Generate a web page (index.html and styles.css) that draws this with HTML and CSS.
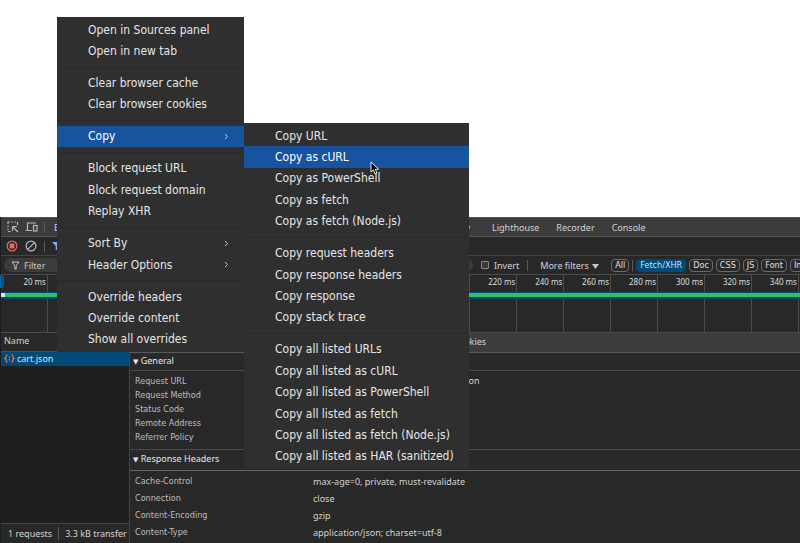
FILE: index.html
```html
<!DOCTYPE html>
<html lang="en">
  <head>
    <meta charset="UTF-8">
    <meta name="viewport" content="width=device-width, initial-scale=1.0">
    <title>DevTools - Network</title>
    <link rel="stylesheet" href="styles.css">
  </head>
  <body>
    <div class="page"></div>

    <div class="devtools">
      <div class="tabs">
        <button class="icon-btn" aria-label="Inspect element">
          <svg width="12" height="12" viewBox="0 0 12 12" fill="none" stroke="#b8b8b8" stroke-width="1.2">
            <path d="M1 3V1h2M4.500 1H6M7.500 1H9M10.500 1v3M1 4.500V6M1 7.500V9M1 10.500h2.500"/>
            <path d="M5.500 5.500L11 11M5.500 10V5.500H10"/>
          </svg>
        </button>
        <button class="icon-btn" aria-label="Toggle device toolbar">
          <svg width="13" height="12" viewBox="0 0 13 12" fill="none" stroke="#b8b8b8" stroke-width="1.2">
            <path d="M11 2H2.500v7M.5 9.500H7"/>
            <rect x="8.500" y="4.500" width="3.500" height="5.500"/>
          </svg>
        </button>
        <span class="divider"></span>
        <div class="tab-list">
          <a href="#">Elements</a>
          <a href="#">Memory</a>
        </div>
        <a href="#">Lighthouse</a>
        <a href="#">Recorder</a>
        <a href="#">Console</a>
      </div>

      <div class="toolbar">
        <button class="icon-btn" aria-label="Stop recording">
          <svg width="12" height="12" viewBox="0 0 12 12">
            <circle cx="6" cy="6" r="4.900" fill="none" stroke="#e46962" stroke-width="1.2"/>
            <rect x="3.600" y="3.600" width="4.800" height="4.800" rx=".6" fill="#e46962"/>
          </svg>
        </button>
        <button class="icon-btn" aria-label="Clear">
          <svg width="12" height="12" viewBox="0 0 12 12" fill="none" stroke="#b8b8b8" stroke-width="1.2">
            <circle cx="6" cy="6" r="4.900"/>
            <path d="M9.400 2.600L2.600 9.400"/>
          </svg>
        </button>
        <span class="divider"></span>
        <button class="icon-btn" aria-label="Filter">
          <svg width="10" height="10" viewBox="0 0 10 10"><path d="M0 1h9L5.600 5v4H3.700V5z" fill="#7cacf8"/></svg>
        </button>
      </div>

      <div class="filters">
        <label class="filter-box">
          <svg width="9" height="9" viewBox="0 0 9 9" fill="none" stroke="#c4c4c4"><path d="M1 1h7L5.200 4.600V8H3.800V4.600z"/></svg>
          <input type="text" placeholder="Filter" aria-label="Filter">
        </label>
        <label class="check"><input type="checkbox"> Invert</label>
        <span class="divider"></span>
        <button class="more">More filters
          <svg width="7" height="5" viewBox="0 0 7 5"><path d="M0 0h7L3.500 5z" fill="#c8c8c8"/></svg>
        </button>
        <div class="pills">
          <button>All</button>
          <span class="divider"></span>
          <button class="active">Fetch/XHR</button>
          <button>Doc</button>
          <button>CSS</button>
          <button>JS</button>
          <button>Font</button>
          <button>Img</button>
        </div>
      </div>

      <div class="timeline">
        <span>20 ms</span><span></span><span></span><span></span><span></span><span></span>
        <span></span><span></span><span></span><span></span><span>220 ms</span><span>240 ms</span>
        <span>260 ms</span><span>280 ms</span><span>300 ms</span><span>320 ms</span><span>340 ms</span>
        <div class="range"></div>
        <div class="handle"></div>
      </div>

      <div class="main">
        <div class="requests">
          <div class="head">Name</div>
          <a href="#" class="request">
            <svg width="11" height="9" viewBox="0 0 11 9" fill="none" stroke="#e8795a" stroke-width="1.2">
              <path d="M3.500.8C1.200.8 3 3.800 1 4.500 3 5.200 1.200 8.200 3.500 8.200M7.500.8C9.800.8 8 3.800 10 4.500 8 5.200 9.800 8.200 7.500 8.200M5.500 2.500v1.500M5.500 5v1.800"/>
            </svg>
            cart.json
          </a>
          <div class="status"><span>1 requests</span><span>3.3 kB transfer</span></div>
        </div>

        <div class="details">
          <div class="detail-tabs">
            <a href="#">Cookies</a>
          </div>
          <h2><span>▼</span> General</h2>
          <dl class="general">
            <dt>Request URL</dt><dd>https://www.my-example.com/cart.json</dd>
            <dt>Request Method</dt><dd></dd>
            <dt>Status Code</dt><dd></dd>
            <dt>Remote Address</dt><dd></dd>
            <dt>Referrer Policy</dt><dd></dd>
          </dl>
          <h2 class="response"><span>▼</span> Response Headers</h2>
          <dl class="headers">
            <dt>Cache-Control</dt><dd>max-age=0, private, must-revalidate</dd>
            <dt>Connection</dt><dd>close</dd>
            <dt>Content-Encoding</dt><dd>gzip</dd>
            <dt>Content-Type</dt><dd>application/json; charset=utf-8</dd>
          </dl>
        </div>
      </div>
    </div>

    <div class="menu context">
      <button>Open in Sources panel</button>
      <button>Open in new tab</button>
      <hr>
      <button>Clear browser cache</button>
      <button>Clear browser cookies</button>
      <hr>
      <button class="selected">Copy <svg class="arrow" viewBox="0 0 5 7"><path d="M1 1l2.500 2.500L1 6"/></svg></button>
      <hr>
      <button>Block request URL</button>
      <button>Block request domain</button>
      <button>Replay XHR</button>
      <hr>
      <button>Sort By <svg class="arrow" viewBox="0 0 5 7"><path d="M1 1l2.500 2.500L1 6"/></svg></button>
      <button>Header Options <svg class="arrow" viewBox="0 0 5 7"><path d="M1 1l2.500 2.500L1 6"/></svg></button>
      <hr>
      <button>Override headers</button>
      <button>Override content</button>
      <button>Show all overrides</button>
    </div>

    <div class="menu submenu">
      <button>Copy URL</button>
      <button class="selected">Copy as cURL</button>
      <button>Copy as PowerShell</button>
      <button>Copy as fetch</button>
      <button>Copy as fetch (Node.js)</button>
      <hr>
      <button>Copy request headers</button>
      <button>Copy response headers</button>
      <button>Copy response</button>
      <button>Copy stack trace</button>
      <hr>
      <button>Copy all listed URLs</button>
      <button>Copy all listed as cURL</button>
      <button>Copy all listed as PowerShell</button>
      <button>Copy all listed as fetch</button>
      <button>Copy all listed as fetch (Node.js)</button>
      <button>Copy all listed as HAR (sanitized)</button>
    </div>

    <svg class="cursor" width="10" height="14" viewBox="0 0 10 14">
      <path d="M1 1v10l2.400-2.200 1.600 3.900 1.900-.8-1.600-3.700H8.700z" fill="#000" stroke="#fff" stroke-width=".9"/>
    </svg>
  </body>
</html>
```
FILE: styles.css
```css
* {
  box-sizing: border-box;
}

body {
  margin: 0;
  height: 100vh;
  overflow: hidden;
  display: flex;
  flex-direction: column;
  background-color: #fff;
  color: #d2d2d2;
  font-family: "Noto Sans", "DejaVu Sans", sans-serif;
  font-size: 9px;
}

a {
  color: inherit;
  text-decoration: none;
}

button,
input {
  margin: 0;
  padding: 0;
  border: none;
  background: none;
  color: inherit;
  font: inherit;
}

.page {
  flex: 0 0 217px;
}

.devtools {
  flex: 1;
  min-height: 0;
  display: flex;
  flex-direction: column;
  background-color: #282828;
  border-left: 1px solid #1c1c1c;
}

.divider {
  flex: none;
  width: 1px;
  height: 11px;
  background-color: #5a5a5a;
}

.icon-btn {
  display: flex;
}

/* top bars */
.tabs {
  height: 20px;
  display: flex;
  align-items: center;
  background-color: #3c3c3c;
  border-top: 1px solid #555;
  border-bottom: 1px solid #555;
}

.tabs .icon-btn {
  margin-left: 6px;
}

.tabs .divider {
  margin: 0 9px 0 6px;
}

.tabs > a {
  margin-right: 17px;
}

.tab-list {
  display: flex;
  justify-content: space-between;
  width: 416px;
  margin-right: 22px;
}

.toolbar {
  height: 19px;
  display: flex;
  align-items: center;
  gap: 7px;
  padding-left: 5px;
  border-bottom: 1px solid #444;
}

.filters {
  height: 19px;
  display: flex;
  align-items: center;
  padding-left: 3px;
  border-bottom: 1px solid #4a4a4a;
  white-space: nowrap;
}

.filters > * {
  flex: none;
}

.filter-box {
  display: flex;
  align-items: center;
  gap: 4px;
  width: 469px;
  height: 14px;
  padding-left: 7px;
  border-radius: 7px;
  background-color: #3c3c3c;
}

.filter-box input::placeholder {
  color: #c8c8c8;
}

.check {
  display: flex;
  align-items: center;
  gap: 5px;
  margin: 0 8px;
}

.check input {
  appearance: none;
  width: 8px;
  height: 8px;
  border: 1px solid #888;
  border-radius: 1px;
  background-color: #3a3a3a;
}

.more {
  margin-left: 12px;
}

.more svg {
  margin-left: 1px;
}

.pills {
  display: flex;
  align-items: center;
  gap: 3px;
  margin-left: 12px;
}

.pills button {
  height: 13px;
  padding: 0 3px;
  border: 1px solid #6a6a6a;
  border-radius: 4px;
  font-family: "DejaVu Sans Condensed", "DejaVu Sans", sans-serif;
  font-stretch: condensed;
  line-height: 11px;
  color: #e0e0e0;
}

.pills .active {
  background-color: #004a77;
  border-color: #004a77;
  color: #c2e7ff;
}

/* overview */
.timeline {
  position: relative;
  height: 57px;
  display: flex;
  margin-right: 1px;
}

.timeline span {
  flex: 1 1 0;
  padding: 1px 1px 0 0;
  border-right: 1px solid #4c4c4c;
  font-size: 8px;
  line-height: 11px;
  text-align: right;
  white-space: nowrap;
  color: #dcdcdc;
}

.range {
  position: absolute;
  top: 17px;
  left: 0;
  right: -1px;
  height: 7px;
  border: solid #004a77;
  border-width: 1px 0 2px;
  background: linear-gradient(90deg, #dbe8f0 4px, #35bd63 4px);
}

.handle {
  position: absolute;
  top: 0;
  left: -1px;
  width: 4px;
  height: 13px;
  border: 1px solid #0a6aa8;
  border-radius: 0 3px 3px 0;
  background-color: #004a77;
}

/* request list and headers */
.main {
  flex: 1;
  min-height: 0;
  display: flex;
}

.requests {
  width: 128px;
  flex: none;
  display: flex;
  flex-direction: column;
  background-color: #1f1f1f;
}

.head {
  height: 20px;
  padding-left: 3px;
  line-height: 16px;
  background-color: #282828;
  border-top: 1px solid #4a4a4a;
  border-bottom: 1px solid #4a4a4a;
}

.request {
  display: flex;
  align-items: center;
  gap: 2px;
  height: 14px;
  padding: 0 0 1px 3px;
  line-height: 12px;
  background-color: #004a77;
  color: #d3e8f7;
}

.status {
  display: flex;
  align-items: center;
  height: 20px;
  margin-top: auto;
  overflow: hidden;
  white-space: nowrap;
  background-color: #282828;
  border-top: 1px solid #444;
}

.status span {
  padding: 0 6px 0 7px;
}

.status span + span {
  padding: 0 0 0 6px;
  border-left: 1px solid #5a5a5a;
}

.details {
  flex: 1;
  min-width: 0;
  border-left: 1px solid #444;
}

.detail-tabs {
  height: 21px;
  padding-left: 323px;
  line-height: 18px;
  background-color: #3c3c3c;
  border-top: 1px solid #4a4a4a;
  border-bottom: 1px solid #5a5a5a;
}

h2 {
  margin: 0;
  height: 18px;
  padding-left: 3px;
  line-height: 16px;
  font-size: 9px;
  font-weight: normal;
  color: #e6e6e6;
  background-color: #28292b;
  border-bottom: 1px solid #4a4a4a;
}

h2 span {
  font-family: "DejaVu Sans", sans-serif;
  font-size: 7px;
}

h2.response {
  height: 22px;
  line-height: 18px;
  border-top: 1px solid #4a4a4a;
  border-bottom-color: #666;
}

dl {
  display: grid;
  grid-template-columns: 178px 1fr;
  margin: 0;
  padding-left: 5px;
}

dd {
  margin: 0;
}

dt {
  color: #bdbdbd;
  font-family: "DejaVu Sans Condensed", "DejaVu Sans", sans-serif;
  font-stretch: condensed;
}

.general {
  padding-top: 3px;
  padding-bottom: 5px;
  line-height: 14px;
}

.headers {
  padding-top: 2px;
  line-height: 17px;
}

/* context menus */
.menu {
  position: absolute;
  display: flex;
  flex-direction: column;
  background-color: #2f2f2f;
  color: #e6e6e6;
  font-family: "DejaVu Sans Condensed", "DejaVu Sans", sans-serif;
  font-stretch: condensed;
  font-size: 12px;
}

.menu button {
  flex: 2 1 0;
  min-height: 0;
  display: flex;
  align-items: center;
  justify-content: space-between;
  padding: 0 15px 0 31px;
  line-height: 14px;
  text-align: left;
  white-space: nowrap;
}

.menu hr {
  flex: 1 1 0;
  width: 100%;
  margin: 0;
  border: none;
  background: linear-gradient(#292929, #292929) center / 100% 1px no-repeat;
}

.menu .selected {
  background-color: #17539f;
  color: #fff;
}

.context {
  left: 57px;
  top: 17px;
  width: 187px;
  height: 335px;
  padding: 2px 0;
}

.submenu {
  left: 244px;
  top: 123px;
  width: 225px;
  height: 346px;
  padding: 2px 0;
}

.arrow {
  width: 5px;
  height: 7px;
  fill: none;
  stroke: #c8c8c8;
}

.cursor {
  position: absolute;
  left: 370px;
  top: 161px;
}
```
